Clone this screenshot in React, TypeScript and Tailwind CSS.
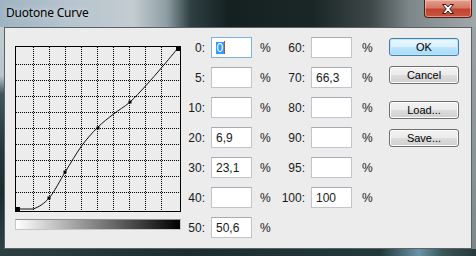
const left: [string, string][] = [
  ["0:", "0"],
  ["5:", ""],
  ["10:", ""],
  ["20:", "6,9"],
  ["30:", "23,1"],
  ["40:", ""],
  ["50:", "50,6"],
];

const right: [string, string][] = [
  ["60:", ""],
  ["70:", "66,3"],
  ["80:", ""],
  ["90:", ""],
  ["95:", ""],
  ["100:", "100"],
];

// curve samples, input % -> output %
const samples: [number, number][] = [
  [0, 0],
  [10, 0],
  [20, 6.9],
  [30, 23.1],
  [40, 39],
  [50, 50.6],
  [60, 59],
  [70, 66.3],
  [80, 76.6],
  [90, 88],
  [100, 100],
];

const knots: [number, number][] = [
  [20, 6.9],
  [30, 23.1],
  [50, 50.6],
  [70, 66.3],
];

const px = (p: number) => 2 + p * 1.61;
const py = (q: number) => 163 - q * 1.61;

function curvePath() {
  const p = samples.map(([a, b]) => [px(a), py(b)]);
  let d = `M${p[0][0]} ${p[0][1]} L${p[1][0]} ${p[1][1]}`;
  for (let i = 1; i < p.length - 1; i++) {
    const p0 = p[i - 1];
    const p1 = p[i];
    const p2 = p[i + 1];
    const p3 = p[Math.min(i + 2, p.length - 1)];
    const c1x = p1[0] + (p2[0] - p0[0]) / 6;
    const c1y = Math.min(163, p1[1] + (p2[1] - p0[1]) / 6);
    const c2x = p2[0] - (p3[0] - p1[0]) / 6;
    const c2y = Math.min(163, p2[1] - (p3[1] - p1[1]) / 6);
    d += ` C${c1x} ${c1y} ${c2x} ${c2y} ${p2[0]} ${p2[1]}`;
  }
  return d;
}

const gridLines = [18, 34, 50, 66, 82, 98, 114, 130, 146];

function Graph() {
  return (
    <svg width="166" height="166" viewBox="0 0 166 166" className="block">
      <rect x="0" y="0" width="166" height="166" fill="#ececec" />
      {gridLines.map((g) => (
        <g key={g}>
          <line x1={g + 0.5} y1="1" x2={g + 0.5} y2="165" stroke="#000" strokeDasharray="1 1" />
          <line x1="1" y1={g + 0.5} x2="165" y2={g + 0.5} stroke="#000" strokeDasharray="1 1" />
        </g>
      ))}
      <rect x="0.5" y="0.5" width="165" height="165" fill="none" stroke="#000" />
      <path d={curvePath()} fill="none" stroke="#111" strokeWidth="1" />
      {knots.map(([a, b]) => (
        <rect key={a} x={Math.round(px(a)) - 1.5} y={Math.round(py(b)) - 1.5} width="3" height="3" fill="#000" />
      ))}
      <rect x="1" y="161" width="4" height="4" fill="#000" />
      <rect x="161" y="1" width="4" height="4" fill="#000" />
    </svg>
  );
}

function Field({ value, focused }: { value: string; focused?: boolean }) {
  return (
    <div className="pl-[6px]">
      <div
        className={
          focused
            ? "w-[41px] h-[21px] bg-white border border-[#7fb2e3] flex items-center pl-[4px]"
            : "w-[41px] h-[21px] bg-white border border-[#c2c4ca] border-t-[#a9abb2] flex items-center pl-[4px]"
        }
      >
        {focused ? (
          <>
            <span className="bg-[#3399ff] text-white leading-[12px] h-[12px] px-[0.5px]">{value}</span>
            <span className="w-[1px] h-[13px] bg-[#a55a23]" />
          </>
        ) : (
          <span>{value}</span>
        )}
      </div>
    </div>
  );
}

function Btn({ label, primary }: { label: string; primary?: boolean }) {
  return (
    <div
      className={
        primary
          ? "w-[70px] h-[18px] rounded-[3px] border border-[#3c7fb1] bg-[linear-gradient(#eaf6fd_0%,#d9f0fc_50%,#bee6fd_51%,#a7d9f5_100%)] shadow-[inset_0_0_0_1px_#c4e5f6] flex items-center justify-center"
          : "w-[70px] h-[18px] rounded-[3px] border border-[#707070] bg-[linear-gradient(#f2f2f2_0%,#ebebeb_50%,#dddddd_51%,#cfcfcf_100%)] shadow-[inset_0_0_0_1px_#fcfcfc] flex items-center justify-center"
      }
    >
      <span className="text-[11px] leading-none text-black">{label}</span>
    </div>
  );
}

export default function App() {
  return (
    <div className="w-[476px] h-[256px] flex flex-col overflow-hidden font-['Liberation_Sans',Arial,sans-serif] text-[12px] text-[#1a1a1a]">
      {/* title bar */}
      <div className="h-[27px] flex items-start bg-[linear-gradient(90deg,#9fb3c2_0%,#b5c4cd_14%,#c3ccd1_28%,#8e9ea4_35%,#2f4043_40%,#152021_48%,#1b2627_66%,#3e4849_78%,#7d8688_86%,#a0a8ab_100%)]">
        <span className="pl-[6px] pt-[6px] text-[12px] leading-[14px] tracking-[-0.2px] text-black font-['Noto_Sans',sans-serif] [text-shadow:0_0_6px_rgba(255,255,255,0.7)]">
          Duotone Curve
        </span>
        <div className="flex-1" />
        <div className="mr-[4px] w-[48px] h-[18px] rounded-b-[4px] border border-t-0 border-[#4a1f1a] bg-[linear-gradient(#e4a08f_0%,#d47a68_45%,#c2432f_55%,#c9553d_100%)] shadow-[inset_0_0_0_1px_rgba(255,210,200,0.5)] flex items-center justify-center">
          <svg width="14" height="12" viewBox="0 0 14 12">
            <path
              d="M1.5 1.5 L5 1.5 L7 4 L9 1.5 L12.5 1.5 L8.8 6 L12.5 10.5 L9 10.5 L7 8 L5 10.5 L1.5 10.5 L5.2 6 Z"
              fill="#fff"
              stroke="#3b1a16"
              strokeWidth="1"
              strokeLinejoin="round"
            />
          </svg>
        </div>
      </div>

      <div className="flex flex-1">
        <div className="w-[4px] bg-[linear-gradient(180deg,#c2ccd1_0%,#b8c4ca_22%,#3f5659_30%,#24373a_55%,#1b2c2f_75%,#2d4245_100%)]" />

        {/* client area */}
        <div className="flex-1 border border-[#5b6266] bg-[#ececec] flex">
          <div className="pl-[10px] pt-[18px] flex flex-col gap-[7px]">
            <Graph />
            <div className="w-[166px] h-[11px] border border-[#c6c6c6] border-t-[#8d8d8d] bg-[linear-gradient(90deg,#ffffff,#000000)]" />
          </div>

          <div className="pt-[9px]">
            <div className="grid grid-cols-[24px_47px_26px_27px_47px_20px] auto-rows-[21px] gap-y-[9px] items-center">
              {left.map(([l, v], i) => (
                <div key={l} className="contents">
                  <div className="flex justify-end whitespace-nowrap">{l}</div>
                  <Field value={v} focused={i === 0} />
                  <div className="pl-[8px]">%</div>
                  {i < right.length ? (
                    <>
                      <div className="flex justify-end whitespace-nowrap">{right[i][0]}</div>
                      <Field value={right[i][1]} />
                      <div className="pl-[10px]">%</div>
                    </>
                  ) : null}
                </div>
              ))}
            </div>
          </div>

          <div className="ml-[17px] pt-[10px] flex flex-col">
            <Btn label="OK" primary />
            <div className="h-[10px]" />
            <Btn label="Cancel" />
            <div className="h-[17px]" />
            <Btn label="Load..." />
            <div className="h-[10px]" />
            <Btn label="Save..." />
          </div>
        </div>

        <div className="w-[4px] bg-[linear-gradient(180deg,#9aa3a7_0%,#8b969a_50%,#7a878b_100%)]" />
      </div>

      <div className="h-[7px] bg-[linear-gradient(90deg,#2c3f41_0%,#1d2d2f_40%,#22393c_80%,#6b93a6_88%,#3a5558_93%,#26383a_100%)]" />
    </div>
  );
}
